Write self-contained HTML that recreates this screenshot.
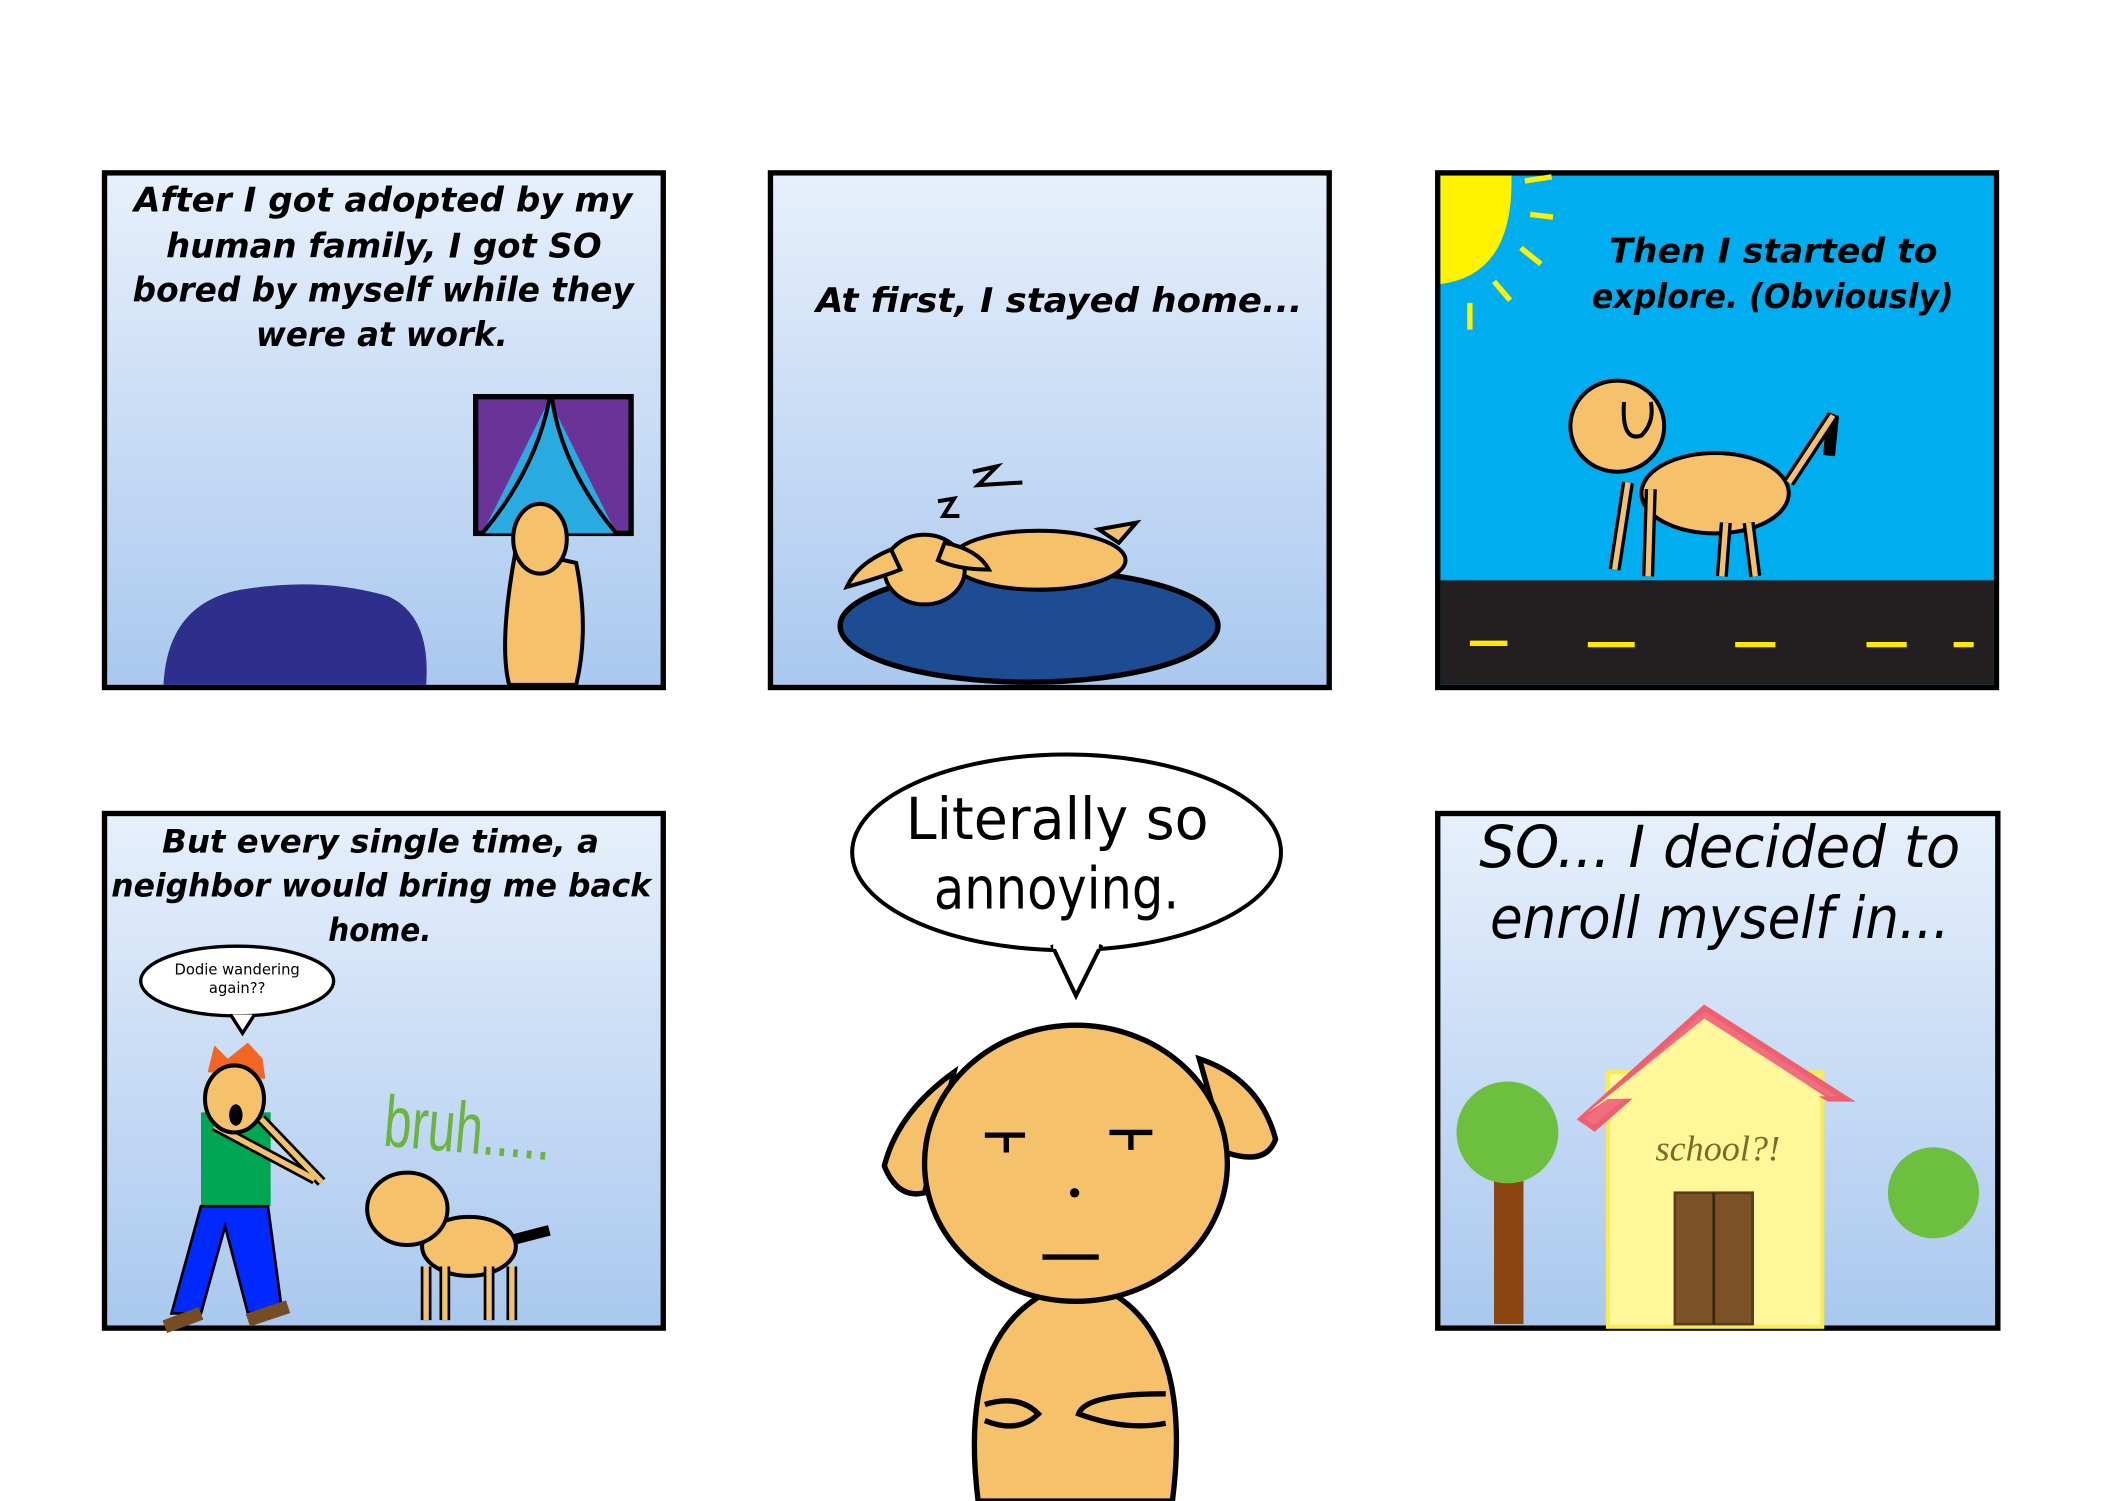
<!DOCTYPE html>
<html><head><meta charset="utf-8"><style>
html,body{margin:0;padding:0;background:#fff;width:2101px;height:1501px;overflow:hidden}
svg{display:block}
.t{font-family:"DejaVu Sans","Liberation Sans",sans-serif;font-style:italic;font-weight:bold;fill:#000}
.c{font-family:"DejaVu Sans","Liberation Sans",sans-serif;fill:#000}
.m{text-anchor:middle}
</style></head><body>
<svg width="2101" height="1501" viewBox="0 0 1568 1120" preserveAspectRatio="none" xmlns="http://www.w3.org/2000/svg">
<defs>
<linearGradient id="g" x1="0" y1="0" x2="0" y2="1"><stop offset="0" stop-color="#e7f0fc"/><stop offset="1" stop-color="#a9c8ee"/></linearGradient>
</defs>
<rect width="1568" height="1120" fill="#fff"/>
<!-- Panel 1 -->
<rect x="78" y="129" width="417" height="384" fill="url(#g)" stroke="#000" stroke-width="4"/>
<text class="t" font-size="25" x="100" y="158" textLength="372" lengthAdjust="spacingAndGlyphs">After I got adopted by my</text>
<text class="t" font-size="25" x="124" y="192" textLength="325" lengthAdjust="spacingAndGlyphs">human family, I got SO</text>
<text class="t" font-size="25" x="99" y="225" textLength="374" lengthAdjust="spacingAndGlyphs">bored by myself while they</text>
<text class="t" font-size="25" x="191" y="258" textLength="188" lengthAdjust="spacingAndGlyphs">were at work.</text>
<path d="M122 511 Q125 450 180 440 Q240 430 290 445 Q322 460 318 511 Z" fill="#2e2e8c"/>
<rect x="355" y="296" width="116" height="102" fill="#6a3399" stroke="#000" stroke-width="4"/>
<path d="M410 298 L360 398 L460 398 Z" fill="#29abe2"/>
<path d="M410 298 Q400 350 360 398 M412 298 Q420 350 460 398" stroke="#000" stroke-width="3" fill="none"/>
<path d="M385 410 Q372 480 380 511 L430 511 Q440 470 430 420 Z" fill="#f5c26b" stroke="#000" stroke-width="3"/>
<ellipse cx="403" cy="402" rx="20" ry="26" fill="#f5c26b" stroke="#000" stroke-width="3"/>
<!-- Panel 2 -->
<rect x="575" y="129" width="417" height="384" fill="url(#g)" stroke="#000" stroke-width="4"/>
<text class="t" font-size="25" x="609" y="233" textLength="363" lengthAdjust="spacingAndGlyphs">At first, I stayed home...</text>
<ellipse cx="768" cy="467" rx="141" ry="42" fill="#1d4c93" stroke="#000" stroke-width="4"/>
<ellipse cx="775" cy="418" rx="65" ry="22" fill="#f5c26b" stroke="#000" stroke-width="3"/>
<ellipse cx="690" cy="425" rx="30" ry="26" fill="#f5c26b" stroke="#000" stroke-width="3"/>
<path d="M665 410 Q640 420 632 438 Q660 430 672 425Z M705 405 Q730 410 738 425 Q715 425 700 418Z M820 395 L848 390 L835 405Z" fill="#f5c26b" stroke="#000" stroke-width="3"/>
<path d="M726 352 L744 348 L730 362 L763 360 M700 374 L712 372 L704 385 L716 385" stroke="#000" stroke-width="3" fill="none"/>
<!-- Panel 3 -->
<rect x="1073" y="129" width="417" height="384" fill="#00aeef" stroke="#000" stroke-width="4"/>
<rect x="1075" y="433" width="413" height="78" fill="#231f20"/>
<path d="M1097 480h28 M1185 481h35 M1295 481h30 M1393 481h30 M1458 481h15" stroke="#ffea00" stroke-width="4"/>
<path d="M1075 131 L1128 131 Q1130 205 1075 212Z" fill="#fff200"/>
<path d="M1138 135l20-3 M1142 160l17 2 M1135 185l15 12 M1115 210l12 14 M1097 226l0 20" stroke="#fff200" stroke-width="4"/>
<text class="t" font-size="25" x="1201" y="196" textLength="245" lengthAdjust="spacingAndGlyphs">Then I started to</text>
<text class="t" font-size="25" x="1188" y="230" textLength="270" lengthAdjust="spacingAndGlyphs">explore. (Obviously)</text>
<ellipse cx="1280" cy="368" rx="55" ry="30" fill="#f5c26b" stroke="#000" stroke-width="3"/>
<path d="M1215 360 L1205 425 M1232 365 L1230 430 M1288 390 L1285 430 M1305 390 L1310 430 M1335 360 L1368 310 L1365 340" stroke="#000" stroke-width="9" fill="none"/>
<path d="M1215 360 L1205 425 M1232 365 L1230 430 M1288 390 L1285 430 M1305 390 L1310 430 M1335 360 L1368 310" stroke="#f5c26b" stroke-width="4" fill="none"/>
<ellipse cx="1207" cy="318" rx="35" ry="34" fill="#f5c26b" stroke="#000" stroke-width="3"/>
<path d="M1212 300 Q1210 330 1225 325 Q1235 315 1232 300" stroke="#000" stroke-width="3" fill="none"/>
<!-- Panel 4 -->
<rect x="78" y="607" width="417" height="384" fill="url(#g)" stroke="#000" stroke-width="4"/>
<text class="t" font-size="24" x="121" y="636" textLength="326" lengthAdjust="spacingAndGlyphs">But every single time, a</text>
<text class="t" font-size="24" x="83" y="669" textLength="403" lengthAdjust="spacingAndGlyphs">neighbor would bring me back</text>
<text class="t" font-size="24" x="245" y="702" textLength="77" lengthAdjust="spacingAndGlyphs">home.</text>
<ellipse cx="177" cy="732" rx="72" ry="26" fill="#fff" stroke="#000" stroke-width="2.5"/>
<path d="M172 757 L181 771 L190 757" fill="#fff" stroke="#000" stroke-width="2.5"/>
<text class="c m" font-size="11" x="177" y="727">Dodie wandering</text>
<text class="c m" font-size="11" x="177" y="741">again??</text>
<path d="M155 800 L160 780 L170 790 L185 778 L196 790 L198 805 Z" fill="#f26522"/>
<rect x="150" y="830" width="52" height="70" fill="#00a651"/>
<path d="M150 900 L128 980 L150 980 L168 915 L185 980 L210 975 L200 900Z" fill="#0029ff" stroke="#000" stroke-width="2"/>
<path d="M160 840 L235 880 M195 835 L240 882" stroke="#000" stroke-width="8"/>
<path d="M160 840 L235 880 M195 835 L240 882" stroke="#f5c26b" stroke-width="4"/>
<ellipse cx="175" cy="820" rx="22" ry="25" fill="#f5c26b" stroke="#000" stroke-width="3"/>
<ellipse cx="176" cy="832" rx="5" ry="8" fill="#000"/>
<path d="M123 990 L150 980 M185 985 L215 975" stroke="#754c24" stroke-width="10"/>
<text x="285" y="860" font-family="Liberation Sans Narrow,Liberation Sans,sans-serif" font-size="54" fill="#6cb33f" textLength="125" lengthAdjust="spacingAndGlyphs" transform="rotate(5 345 862)">bruh.....</text>
<ellipse cx="350" cy="930" rx="35" ry="22" fill="#f5c26b" stroke="#000" stroke-width="3"/>
<path d="M318 945v40 M332 945v40 M365 945v40 M382 945v40 M383 925 L410 918" stroke="#000" stroke-width="8"/>
<path d="M318 945v40 M332 945v40 M365 945v40 M382 945v40" stroke="#f5c26b" stroke-width="4"/>
<ellipse cx="304" cy="902" rx="30" ry="27" fill="#f5c26b" stroke="#000" stroke-width="3"/>
<!-- Center -->
<ellipse cx="796" cy="636" rx="160" ry="73" fill="#fff" stroke="#000" stroke-width="3"/>
<path d="M785 705 L803 743 L822 705" fill="#fff" stroke="#000" stroke-width="3"/>
<path d="M786 706 L820 706" stroke="#fff" stroke-width="4"/>
<text class="c" font-size="43" x="676" y="626" textLength="226" lengthAdjust="spacingAndGlyphs">Literally so</text>
<text class="c" font-size="43" x="697" y="678" textLength="183" lengthAdjust="spacingAndGlyphs">annoying.</text>
<path d="M730 1120 Q715 1000 780 965 L830 965 Q890 1000 875 1120Z" fill="#f5c26b" stroke="#000" stroke-width="4"/>
<path d="M712 800 Q670 830 660 870 Q670 895 690 890Z M895 790 Q940 805 952 850 Q945 870 915 860Z" fill="#f5c26b" stroke="#000" stroke-width="4"/>
<ellipse cx="803" cy="868" rx="113" ry="103" fill="#f5c26b" stroke="#000" stroke-width="4"/>
<path d="M735 847h30 M751 847v13 M828 845h32 M844 845v13 M778 938h42 M735 1048 Q760 1040 775 1055 Q760 1070 735 1060 M870 1040 Q810 1040 805 1055 Q840 1068 870 1062" stroke="#000" stroke-width="4" fill="none"/>
<circle cx="802" cy="890" r="3.5"/>
<!-- Panel 6 -->
<rect x="1073" y="607" width="418" height="384" fill="url(#g)" stroke="#000" stroke-width="4"/>
<text class="c" font-size="43" font-style="italic" x="1104" y="647" textLength="359" lengthAdjust="spacingAndGlyphs">SO... I decided to</text>
<text class="c" font-size="43" font-style="italic" x="1112" y="700" textLength="343" lengthAdjust="spacingAndGlyphs">enroll myself in...</text>
<rect x="1115" y="880" width="22" height="108" fill="#8b4513"/>
<circle cx="1125" cy="845" r="38" fill="#6cbf3f"/>
<circle cx="1443" cy="890" r="34" fill="#6cbf3f"/>
<rect x="1200" y="800" width="160" height="190" fill="#fff799" stroke="#f7ec55" stroke-width="3"/>
<path d="M1180 835 L1272 752 L1378 820 L1365 820 L1272 770 L1190 842Z" fill="#f26e7e" stroke="#ee6070" stroke-width="4"/>
<path d="M1185 830 L1272 760 L1362 818 L1200 820Z" fill="#fff799"/>
<rect x="1250" y="890" width="58" height="98" fill="#7c5125" stroke="#5a3a1a" stroke-width="2"/>
<path d="M1279 890v98" stroke="#3a2510" stroke-width="2"/>
<text x="1282" y="866" font-family="Liberation Serif,serif" font-style="italic" font-size="27" fill="#7c6a2a" text-anchor="middle">school?!</text>
</svg>
</body></html>
